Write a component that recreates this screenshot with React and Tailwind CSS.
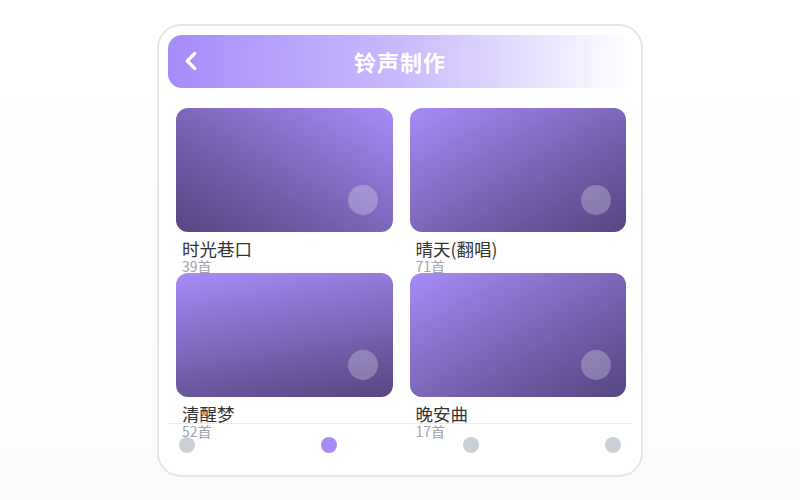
import { ChevronLeft } from "lucide-react";

const songs = [
  { title: "时光巷口", count: "39首", dir: "bg-linear-to-bl" },
  { title: "晴天(翻唱)", count: "71首", dir: "bg-linear-to-br" },
  { title: "清醒梦", count: "52首", dir: "bg-linear-[170deg]" },
  { title: "晚安曲", count: "17首", dir: "bg-linear-to-br" },
];

const SongCard = ({ song }) => {
  return (
    <div className="h-[165px]">
      <div
        className={`relative h-[124px] rounded-[12px] ${song.dir} from-[#a68bf8] to-[#574580]`}
      >
        <div className="absolute right-[15px] bottom-[17px] w-[30px] h-[30px] rounded-full bg-white/25" />
      </div>
      <div className="h-[28px] px-[6px] pt-[7px]">
        <p className="text-[17.5px] leading-[20px] text-[#333333]">{song.title}</p>
        <p className="text-[14px] leading-[14px] text-[#a3a3a8]">{song.count}</p>
      </div>
    </div>
  );
};

export default function App() {
  const dots = [false, true, false, false];

  return (
    <div
      className="w-[800px] h-[500px] flex items-center justify-center bg-linear-to-b from-white to-[#fcfcfd]"
      style={{ fontFamily: '"Noto Sans CJK SC", "Noto Sans", sans-serif' }}
    >
      <div className="w-[486px] h-[453px] border-2 border-[#e6e6ea] rounded-[24px] bg-white p-[9px] flex flex-col">
        <div className="relative h-[53px] shrink-0 rounded-[14px] bg-linear-to-r from-[#a78bfa] via-[#c9b9fb] to-white flex items-center justify-center">
          <ChevronLeft
            className="absolute left-[8px] text-white"
            size={30}
            strokeWidth={2.6}
          />
          <h1 className="text-[22px] font-bold text-white tracking-[1px]">铃声制作</h1>
        </div>

        <div className="flex-1 min-h-0 pl-[8px] pr-[6px] pt-[20px]">
          <div className="grid grid-cols-2 gap-x-[17px]">
            {songs.map((song) => (
              <SongCard key={song.title} song={song} />
            ))}
          </div>
        </div>

        <div className="relative h-[43px] shrink-0 border-t border-[#ececf0] px-[11px] pt-[1px] flex items-center justify-between">
          {dots.map((active, i) => (
            <span
              key={i}
              className={`w-[16px] h-[16px] rounded-full ${active ? "bg-[#a78bfa]" : "bg-[#cbd0d6]"}`}
            />
          ))}
        </div>
      </div>
    </div>
  );
}
